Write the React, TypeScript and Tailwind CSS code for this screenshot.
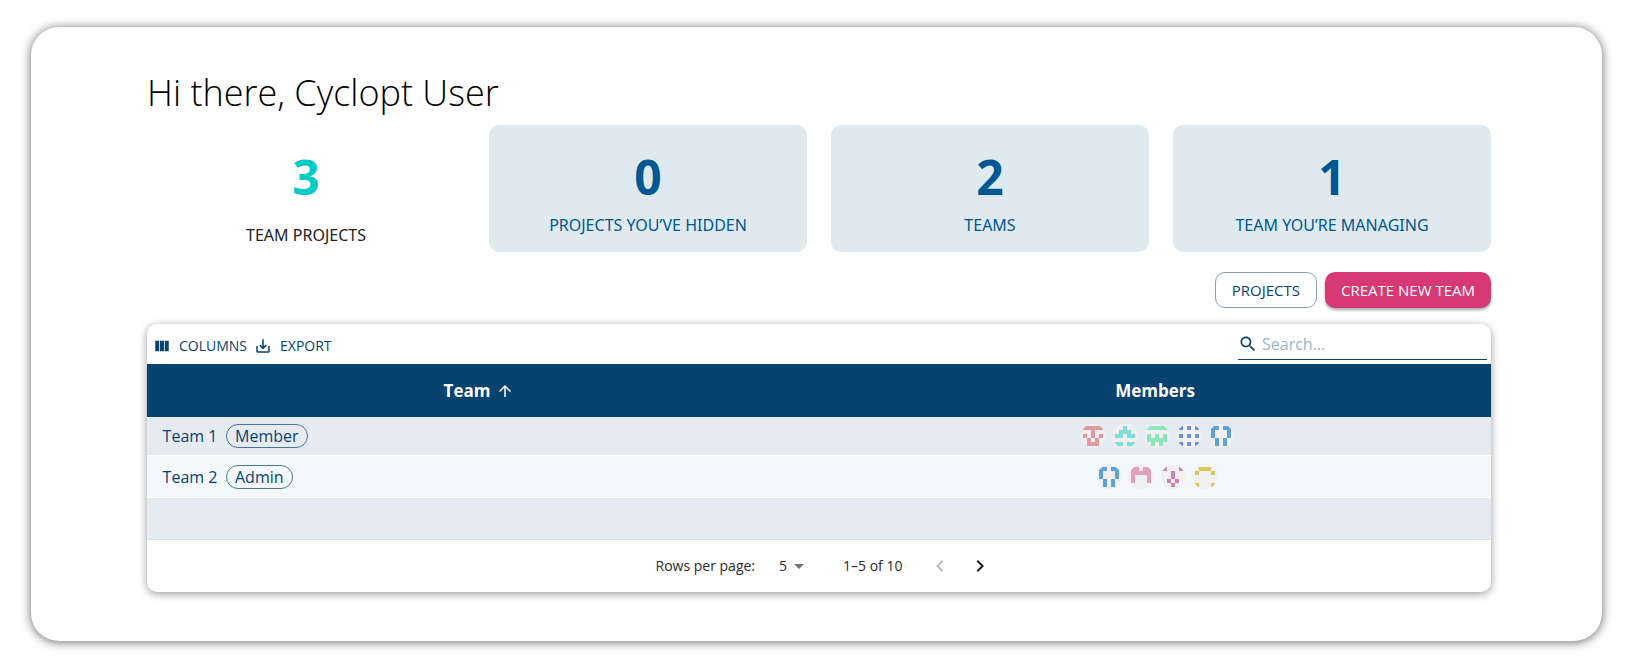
import React from "react";

type Stat = { value: number; label: string; active?: boolean };
type Identicon = { color: string; rows: string[] };
type Team = { name: string; role: string; members: Identicon[] };

const stats: Stat[] = [
  { value: 3, label: "TEAM PROJECTS", active: true },
  { value: 0, label: "PROJECTS YOU’VE HIDDEN" },
  { value: 2, label: "TEAMS" },
  { value: 1, label: "TEAM YOU’RE MANAGING" },
];

const blue: Identicon = { color: "#5ca3dc", rows: ["11011", "10001", "10001", "01010", "01010"] };

const teams: Team[] = [
  {
    name: "Team 1",
    role: "Member",
    members: [
      { color: "#df9a9f", rows: ["11111", "00100", "10101", "01010", "01110"] },
      { color: "#80dcd8", rows: ["00100", "01110", "11011", "00000", "11011"] },
      { color: "#8ee4bf", rows: ["11111", "00000", "10101", "11111", "01010"] },
      { color: "#6a90e0", rows: ["10101", "00000", "10101", "00000", "10101"] },
      blue,
    ],
  },
  {
    name: "Team 2",
    role: "Admin",
    members: [
      blue,
      { color: "#e3a0ba", rows: ["11011", "11111", "10001", "10001", "00000"] },
      { color: "#d481ae", rows: ["10001", "00100", "00100", "01010", "00100"] },
      { color: "#d8c954", rows: ["01110", "10001", "00000", "00000", "10001"] },
    ],
  },
];

function Icon({ d, className }: { d: string; className: string }) {
  return (
    <svg viewBox="0 0 24 24" fill="currentColor" aria-hidden="true" className={className}>
      <path d={d} />
    </svg>
  );
}

function Avatar({ icon }: { icon: Identicon }) {
  return (
    <svg viewBox="0 0 24 24" aria-hidden="true" className="size-6 rounded-full bg-[#f0f0f0]">
      <g fill={icon.color} shapeRendering="crispEdges">
        {icon.rows.flatMap((row, y) =>
          row.split("").map((cell, x) =>
            cell === "1" ? (
              <rect key={`${x}-${y}`} x={2 + x * 4} y={2 + y * 4} width="4" height="4" />
            ) : null,
          ),
        )}
      </g>
    </svg>
  );
}

function StatCard({ stat }: { stat: Stat }) {
  return (
    <div className={`rounded-[10px] pt-6 pb-[15px] text-center font-['Noto_Sans',sans-serif] ${stat.active ? "text-[#222]" : "bg-[#dfeaf0] text-[#005792]"}`}>
      <div className={`text-5xl leading-[56px] font-bold ${stat.active ? "text-[#00ccc6]" : ""}`}>{stat.value}</div>
      <div className={`text-base leading-6 ${stat.active ? "mt-[18px] -mb-[10px]" : "mt-2"}`}>{stat.label}</div>
    </div>
  );
}

export default function App() {
  return (
    <div className="bg-white pt-[27px] pr-8 pb-[26px] pl-[31px] font-['Open_Sans','Noto_Sans',sans-serif]">
      <main className="rounded-[28px] bg-white pt-[42px] pr-[111px] pb-[49px] pl-[116px] shadow-[0_1px_10px_1px_rgba(0,0,0,0.5)]">
        <h1 className="pb-2 text-4xl leading-[48px] font-light text-black">Hi there, Cyclopt User</h1>

        <section className="grid grid-cols-4 gap-6">
          {stats.map((stat) => (
            <StatCard key={stat.label} stat={stat} />
          ))}
        </section>

        <div className="mt-5 flex justify-end gap-2 text-[15px]">
          <button className="h-9 rounded-[10px] border border-[#84a1b8] px-4 text-[#08426e]">PROJECTS</button>
          <button className="h-9 rounded-[10px] bg-[#d63974] px-4 text-white shadow-[0_2px_3px_rgba(0,0,0,0.35)]">
            CREATE NEW TEAM
          </button>
        </div>

        <section className="mt-4 overflow-hidden rounded-[10px] bg-white text-[#08426e] shadow-[0_2px_8px_rgba(0,0,0,0.4)]">
          <div className="flex h-10 items-center justify-between pr-1 pl-[6px]">
            <div className="flex gap-[7px] pt-1 text-sm">
              <button className="flex items-center gap-2">
                <Icon className="size-[18px]" d="M14.67 5v14H9.33V5h5.34zm1 14H21V5h-5.33v14zm-7.34 0V5H3v14h5.33z" />
                COLUMNS
              </button>
              <button className="flex items-center gap-2">
                <Icon
                  className="size-[18px]"
                  d="M19 12v7H5v-7H3v7c0 1.1.9 2 2 2h14c1.1 0 2-.9 2-2v-7h-2zm-6 .67l2.59-2.58L17 11.5l-5 5-5-5 1.41-1.41L11 12.67V3h2z"
                />
                EXPORT
              </button>
            </div>
            <label className="flex h-8 w-[249px] items-center gap-1 border-b border-[#08426e]">
              <Icon
                className="size-5 shrink-0"
                d="M15.5 14h-.79l-.28-.27C15.41 12.59 16 11.11 16 9.5 16 5.91 13.09 3 9.5 3S3 5.91 3 9.5 5.91 16 9.5 16c1.61 0 3.09-.59 4.23-1.57l.27.28v.79l5 4.99L20.49 19l-4.99-5zm-6 0C7.01 14 5 11.99 5 9.5S7.01 5 9.5 5 14 7.01 14 9.5 11.99 14 9.5 14z"
              />
              <input
                type="text"
                aria-label="Search"
                placeholder="Search..."
                className="w-full min-w-0 bg-transparent text-base outline-none placeholder:text-[#9db3c5]"
              />
            </label>
          </div>

          <table className="w-full table-fixed border-separate border-spacing-0">
            <thead>
              <tr className="h-[53px] bg-[#08426e] text-[17px] text-white">
                <th className="p-0 font-bold">
                  <span className="flex items-center justify-center gap-[6px] pr-2">
                    Team
                    <Icon className="size-[18px]" d="M4 12l1.41 1.41L11 7.83V20h2V7.83l5.58 5.59L20 12l-8-8-8 8z" />
                  </span>
                </th>
                <th className="p-0 font-bold">Members</th>
              </tr>
            </thead>
            <tbody>
              {teams.map((team, i) => (
                <tr key={team.name} className={i % 2 ? "h-[42px] bg-[#f4f8fb]" : "h-[39px] bg-[#e6ebf2]"}>
                  <td className="border-b border-white p-0">
                    <div className="flex items-center gap-2 pl-[15px]">
                      <span className="w-14 text-center text-base whitespace-nowrap">{team.name}</span>
                      <span className="h-6 rounded-full border border-[#4a7598] px-2 text-base leading-[22px]">{team.role}</span>
                    </div>
                  </td>
                  <td className="border-b border-white p-0">
                    <div className="flex justify-center gap-2 pl-1">
                      {team.members.map((icon, n) => (
                        <Avatar key={n} icon={icon} />
                      ))}
                    </div>
                  </td>
                </tr>
              ))}
              <tr className="h-[42px] bg-[#e6ebf2]">
                <td colSpan={2} className="border-b border-[#dcdfe3] p-0" />
              </tr>
            </tbody>
          </table>

          <div className="flex h-[52px] items-center justify-center pl-[18px] text-sm text-[#2b2b2b]">
            <label htmlFor="rows">Rows per page:</label>
            <div className="relative ml-4 flex items-center">
              <select id="rows" defaultValue="5" className="w-10 appearance-none bg-transparent pl-2">
                <option>5</option>
                <option>10</option>
              </select>
              <Icon className="pointer-events-none absolute right-0 size-6 text-[#757575]" d="M7 10l5 5 5-5z" />
            </div>
            <span className="ml-8">1–5 of 10</span>
            <div className="ml-[18px] flex">
              <button aria-label="Previous page" disabled className="flex size-10 items-center justify-center text-[#bdbdbd]">
                <Icon className="size-6" d="M15.41 7.41L14 6l-6 6 6 6 1.41-1.41L10.83 12z" />
              </button>
              <button aria-label="Next page" className="flex size-10 items-center justify-center text-[#1f1f1f]">
                <Icon className="size-6" d="M10 6L8.59 7.41 13.17 12l-4.58 4.59L10 18l6-6z" />
              </button>
            </div>
          </div>
        </section>
      </main>
    </div>
  );
}
